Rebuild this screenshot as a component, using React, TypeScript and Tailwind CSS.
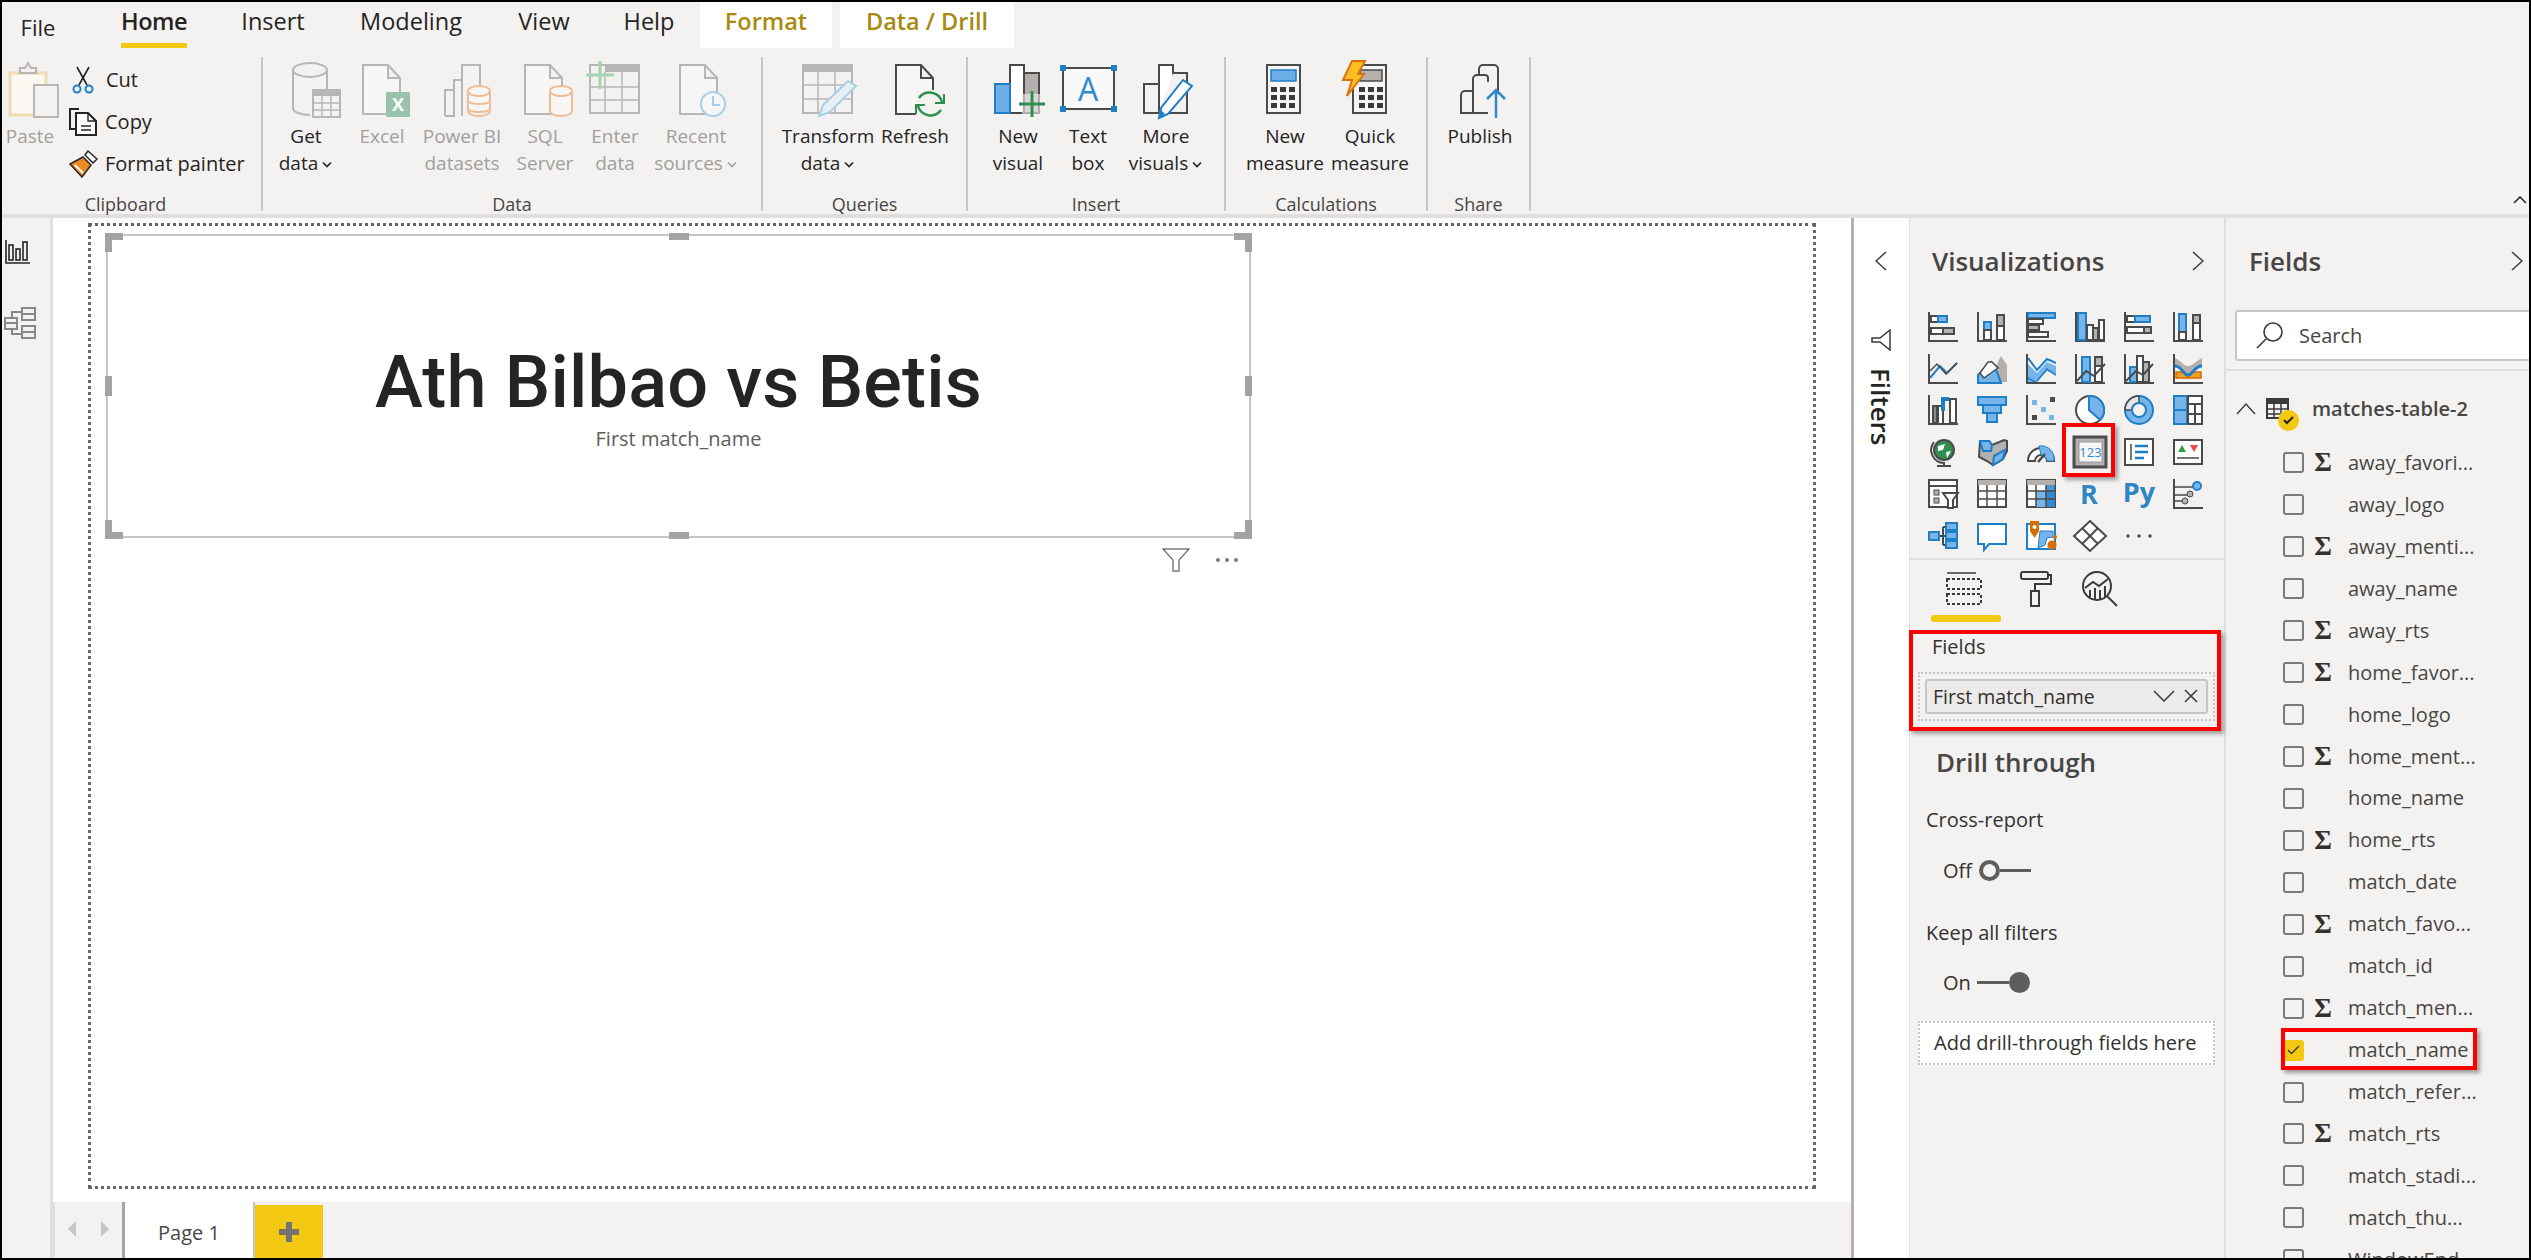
import type { ReactNode } from "react";

const D = "#4a4a4a";
const B = "#76b4ea";
const BD = "#1e7fc8";
const G = "#b3b0ad";
const W = "#ffffff";
const L = "#b8b6b4";

function R(x: number, y: number, w: number, h: number, f: string, s: string = D) {
  return <rect x={x} y={y} width={w} height={h} fill={f} stroke={s} strokeWidth={2} />;
}

const Ax = () => <path d="M1 0V29H30" stroke={D} strokeWidth={2} fill="none" />;

function Viz({ children }: { children: ReactNode }) {
  return (
    <svg width={30} height={30} viewBox="0 0 30 30" fill="none" className="overflow-visible">
      {children}
    </svg>
  );
}

const vizIcons: ReactNode[] = [
  <><Ax />{R(3, 4, 7, 6, W)}{R(10, 4, 9, 6, B, BD)}{R(3, 16, 12, 6, W)}{R(15, 16, 11, 6, G)}</>,
  <><Ax />{R(7, 10, 7, 8, B, BD)}{R(7, 18, 7, 10, W)}{R(20, 3, 7, 11, G)}{R(20, 14, 7, 14, W)}</>,
  <><Ax />{R(2, 1, 27, 5, B, BD)}{R(2, 7, 15, 5, W)}{R(2, 13, 11, 5, G)}{R(2, 20, 20, 5, W)}</>,
  <><Ax />{R(3, 1, 8, 27, B, BD)}{R(12, 13, 6, 15, W)}{R(18, 16, 5, 12, G)}{R(24, 8, 5, 20, W)}</>,
  <><Ax />{R(3, 4, 8, 6, W)}{R(11, 4, 15, 6, B, BD)}{R(3, 15, 17, 6, W)}{R(20, 15, 7, 6, G)}</>,
  <><Ax />{R(6, 2, 7, 18, B, BD)}{R(6, 20, 7, 8, W)}{R(20, 3, 7, 8, G)}{R(20, 11, 7, 17, W)}</>,

  <><Ax /><path d="M2 24L12 12L19 19L29 9" stroke={BD} strokeWidth={2} /><path d="M2 17L9 10L18 20L29 9" stroke={D} strokeWidth={1.5} /></>,
  <><path d="M18 14L24 2L30 11V28H14Z" fill={G} /><path d="M1 29V21L14 8L20 18L24 29Z" fill={B} stroke={BD} strokeWidth={2} /><path d="M3 19L11 8H15L21 14L11 21L7 24Z" fill={W} stroke={D} strokeWidth={1.5} /><path d="M0 29H24" stroke={BD} strokeWidth={2} /></>,
  <><path d="M2 10L11 19L21 8L30 12V22L21 17L11 28H2Z" fill={B} stroke={BD} strokeWidth={0} /><path d="M2 4L11 16L21 5L30 9" stroke={BD} strokeWidth={2} /><path d="M2 24L11 29M30 21L21 15L11 27" stroke={BD} strokeWidth={1.5} /><Ax /></>,
  <><Ax />{R(7, 3, 8, 25, B, BD)}{R(20, 3, 7, 9, G)}{R(20, 12, 7, 16, W)}<path d="M2 27L11 17L19 22L30 10" stroke={D} strokeWidth={2} /></>,
  <><Ax />{R(6, 13, 7, 15, B, BD)}{R(13, 2, 6, 26, W)}{R(19, 8, 6, 20, G)}<path d="M2 27L12 17L19 21L29 10" stroke={D} strokeWidth={2} /></>,
  <><Ax /><path d="M2 4C10 8 10 12 15 12C20 12 21 8 29 4V13C21 13 21 22 15 22C9 22 9 13 2 13Z" fill={G} /><path d="M3 18H12L15 24L19 18H28V24H3Z" fill="#f0a020" stroke="#d86c00" strokeWidth={1.5} /><path d="M2 12C9 12 10 21 15 21C20 21 21 12 29 12" stroke={BD} strokeWidth={3} /></>,

  <><Ax />{R(5, 11, 4, 17, "#8a8886")}<path d="M10 28V11H15V28" stroke={D} strokeWidth={2} fill={W} /><path d="M15 16V4H21" stroke={BD} strokeWidth={4} /><path d="M22 4H28V28H22Z" fill={W} stroke={D} strokeWidth={2} /></>,
  <>{R(1, 2, 28, 8, B, BD)}{R(6, 10, 18, 8, B, BD)}{R(10, 18, 10, 9, B, BD)}</>,
  <><Ax /><rect x="6" y="5" width="5" height="5" fill={B} /><rect x="24" y="2" width="5" height="5" fill={D} /><rect x="15" y="12" width="5" height="5" fill={B} /><rect x="6" y="20" width="5" height="5" fill={D} /><rect x="23" y="20" width="5" height="5" fill={B} /></>,
  <><circle cx="15" cy="15" r="14" fill={W} stroke={D} strokeWidth={2} /><path d="M14 15V1A14 14 0 0 1 25 25Z" fill={B} stroke={BD} strokeWidth={2} /></>,
  <><circle cx="15" cy="15" r="14" fill={B} stroke={BD} strokeWidth={2} /><path d="M15 1A14 14 0 0 0 1 15H8A7 7 0 0 1 15 8Z" fill="#e6e4e2" stroke={D} strokeWidth={1.5} /><circle cx="15" cy="15" r="7" fill="#f3f2f1" stroke={BD} strokeWidth={2} /></>,
  <>{R(1, 1, 13, 28, B, BD)}<path d="M1 15H14" stroke={BD} strokeWidth={2} />{R(15, 1, 14, 28, W)}<path d="M15 9H29M15 19H29M22 9V29" stroke={D} strokeWidth={2} /></>,

  <><circle cx="16" cy="13" r="10" fill="#2f8f4e" stroke={D} strokeWidth={2} /><path d="M10 9L17 7L15 13L10 14ZM18 15L23 14L19 21Z" fill={W} /><path d="M6 5A13 13 0 0 0 16 26V29M9 29H23" stroke={D} strokeWidth={2} /></>,
  <><path d="M3 4H12L15 8L27 3L30 4V14L26 22L16 28L10 24L2 20Z" fill={G} stroke={D} strokeWidth={2} /><path d="M3 4H12L15 8L14 14H6ZM17 19L28 13L26 22L16 28Z" fill={B} stroke={BD} strokeWidth={2} /></>,
  <><path d="M2 24A13 13 0 0 1 28 24H21A6 6 0 0 0 9 24Z" fill={W} stroke={D} strokeWidth={2} /><path d="M13 9A13 13 0 0 1 28 24H21A7 7 0 0 0 15 18Z" fill={B} stroke={BD} strokeWidth={1} /><path d="M12 25L19 17" stroke={D} strokeWidth={2.5} /></>,
  <>
    <rect x="-1" y="0" width="32" height="30" fill="#b3b0ad" stroke="#4d4d4d" strokeWidth={3} />
    <rect x="4" y="5" width="23" height="20" fill="#f7f7f7" stroke="#9a9a9a" strokeWidth={1} />
    <text x="15.5" y="20" textAnchor="middle" fontSize={13} fill="#2f8ad0" fontFamily="Open Sans, sans-serif">123</text>
  </>,
  <>{R(1, 2, 28, 26, W)}<path d="M7 7V23" stroke={D} strokeWidth={1.5} /><path d="M11 9H24M11 15H24M11 21H20" stroke={BD} strokeWidth={2.5} /></>,
  <>{R(1, 3, 28, 24, W)}<path d="M5 15L9 8L13 15Z" fill="#2f9e44" /><path d="M17 8H25L21 15Z" fill="#e8474c" /><path d="M4 21H26" stroke={D} strokeWidth={1.5} /></>,

  <>{R(1, 1, 28, 27, W)}<path d="M1 7H29" stroke={D} strokeWidth={2} /><rect x="6" y="11" width="5" height="5" fill={G} stroke={D} /><rect x="6" y="19" width="5" height="5" fill={G} stroke={D} /><path d="M15 14H30L25 21V29H20V21Z" fill={W} stroke={D} strokeWidth={2} /></>,
  <>{R(1, 1, 28, 27, W)}<rect x="1" y="1" width="28" height="5" fill={G} /><path d="M1 12H29M1 20H29M10 6V28M20 6V28" stroke={D} strokeWidth={1.5} /></>,
  <>{R(1, 1, 28, 27, W)}<rect x="1" y="1" width="28" height="5" fill={G} /><rect x="10" y="12" width="19" height="16" fill={B} /><rect x="20" y="6" width="9" height="22" fill={BD} opacity={0.8} /><path d="M1 12H29M1 20H29M10 6V28M20 6V28" stroke={D} strokeWidth={1.5} /></>,
  <text x="14" y="25" textAnchor="middle" fontSize={27} fontWeight={700} fill="#2f86c5" fontFamily="Open Sans, sans-serif">R</text>,
  <text x="15" y="23" textAnchor="middle" fontSize={27} fontWeight={700} fill="#2f86c5" fontFamily="Open Sans, sans-serif">Py</text>,
  <><Ax /><path d="M2 8H22M2 16H14M2 22H9" stroke={D} strokeWidth={1.5} /><circle cx="24" cy="7" r="4" fill={B} stroke={BD} strokeWidth={2} /><circle cx="17" cy="15" r="3" fill={G} stroke={D} /><circle cx="12" cy="22" r="3" fill={G} stroke={D} /></>,

  <><path d="M11 15H15M15 6H18M15 15H18M15 24H18M15 6V24" stroke={D} strokeWidth={2} />{R(1, 11, 10, 8, B, BD)}{R(18, 2, 11, 7, B, BD)}{R(18, 11, 11, 7, B, BD)}{R(18, 20, 11, 7, B, BD)}</>,
  <path d="M1 3H29V23H12L7 29V23H1Z" fill={W} stroke={BD} strokeWidth={2} />,
  <><path d="M1 3H29V28H1Z" fill={W} stroke={BD} strokeWidth={2} /><path d="M14 10H27V16L21 17L19 24L12 27Z" fill={B} stroke={BD} strokeWidth={1} /><path d="M4 0H13V10L8.5 17L4 10Z" fill="#d86c00" /><circle cx="8.5" cy="6" r="2" fill={W} /><circle cx="26" cy="24" r="4.5" fill="#d86c00" /><circle cx="29" cy="16" r="2" fill="#d86c00" /></>,
  <><path d="M15 0L31 15L15 30L-1 15Z" fill={W} stroke={D} strokeWidth={2} /><path d="M7 7L23 23M23 7L15 15M7 23L15 15" stroke={D} strokeWidth={2} /></>,
  <><circle cx="4" cy="15" r="1.7" fill={D} /><circle cx="15" cy="15" r="1.7" fill={D} /><circle cx="26" cy="15" r="1.7" fill={D} /></>,
];

function Rib({ children }: { children: ReactNode }) {
  return (
    <svg width={64} height={60} viewBox="0 0 64 60" fill="none" className="overflow-visible shrink-0">
      {children}
    </svg>
  );
}

const page = (x: number, c: string) => (
  <path d={`M${x} 5H${x + 25}L${x + 37} 18V54H${x}Z M${x + 25} 5V18H${x + 37}`} fill="#f7f6f5" stroke={c} strokeWidth={2} />
);

const iconGetData = (
  <Rib>
    <ellipse cx="36" cy="10" rx="17" ry="7" fill="#f3f2f1" stroke={L} strokeWidth={2} />
    <path d="M19 10V48C19 52 27 55 36 55M53 10V30" stroke={L} strokeWidth={2} />
    <rect x="39" y="30" width="27" height="27" fill="#f3f2f1" stroke={L} strokeWidth={2} />
    <rect x="39" y="30" width="27" height="6" fill={L} />
    <path d="M39 43H66M39 50H66M48 36V57M57 36V57" stroke={L} strokeWidth={1.5} />
  </Rib>
);
const iconExcel = (
  <Rib>
    {page(13, L)}
    <rect x="36" y="32" width="24" height="25" rx="1" fill="#9ac3ae" />
    <text x="48" y="51" textAnchor="middle" fontSize={18} fontWeight={700} fill="#fff" fontFamily="Open Sans, sans-serif">X</text>
  </Rib>
);
const dbIcon = (x: number) => (
  <g stroke="#eebd96" strokeWidth={2} fill="#f7f6f5">
    <path d={`M${x} 31V51C${x} 54 ${x + 5} 56 ${x + 11} 56C${x + 17} 56 ${x + 22} 54 ${x + 22} 51V31`} />
    <ellipse cx={x + 11} cy={31} rx={11} ry={5} />
  </g>
);
const iconPowerBi = (
  <Rib>
    <path d="M32 56V5H50V30M24 56V20H32M15 56V30H24V56H15" stroke={L} strokeWidth={2} fill="#f3f2f1" />
    {dbIcon(38)}
    <path d="M38 41C40 45 58 45 60 41M38 49C40 53 58 53 60 49" stroke="#eebd96" strokeWidth={2} />
  </Rib>
);
const iconSql = (
  <Rib>
    {page(12, L)}
    {dbIcon(37)}
  </Rib>
);
const iconEnter = (
  <Rib>
    <rect x="7" y="5" width="49" height="48" fill="#f3f2f1" stroke={L} strokeWidth={2} />
    <rect x="22" y="5" width="34" height="7" fill={L} />
    <path d="M7 27H56M7 40H56M22 12V53M39 12V53" stroke={L} strokeWidth={1.5} />
    <path d="M17 1V29M3 15H31" stroke="#a5d3b4" strokeWidth={3} />
  </Rib>
);
const iconRecent = (
  <Rib>
    {page(16, L)}
    <circle cx="49" cy="44" r="12" fill="#f7f6f5" stroke="#a9cfe8" strokeWidth={2} />
    <path d="M49 36V45H56" stroke="#a9cfe8" strokeWidth={2} />
  </Rib>
);
const iconTransform = (
  <Rib>
    <rect x="7" y="5" width="49" height="48" fill="#f3f2f1" stroke={L} strokeWidth={2} />
    <rect x="7" y="5" width="49" height="7" fill={L} />
    <path d="M7 25H56M7 39H56M22 12V53M39 12V53" stroke={L} strokeWidth={1.5} />
    <path d="M52 21L60 26L34 52L23 56L27 45Z" fill="#e6eef6" stroke="#a9cfe8" strokeWidth={2} />
  </Rib>
);
const iconRefresh = (
  <Rib>
    {page(13, D)}
    <rect x="33" y="30" width="28" height="30" fill="#f3f2f1" />
    <path d="M36 38A13 13 0 0 1 59 42M58 50A13 13 0 0 1 35 46" stroke="#2f8f4e" strokeWidth={2.5} />
    <path d="M61 34V43H52M33 54V45H42" stroke="#2f8f4e" strokeWidth={2} />
  </Rib>
);
const iconNewVisual = (
  <Rib>
    <rect x="38" y="13" width="15" height="40" fill={G} stroke={D} strokeWidth={2} />
    <rect x="24" y="5" width="14" height="48" fill="#fff" stroke={D} strokeWidth={2} />
    <rect x="9" y="24" width="15" height="29" fill="#6caee8" stroke={BD} strokeWidth={2} />
    <rect x="36" y="34" width="22" height="24" fill="#f3f2f1" opacity={0.6} />
    <path d="M46 31V57M33 44H59" stroke="#2f8f4e" strokeWidth={3} />
  </Rib>
);
const iconTextBox = (
  <Rib>
    <rect x="7" y="8" width="51" height="41" fill="#f9f9f9" stroke={D} strokeWidth={2} />
    <rect x="4" y="5" width="6" height="6" fill={BD} />
    <rect x="55" y="5" width="6" height="6" fill={BD} />
    <rect x="4" y="46" width="6" height="6" fill={BD} />
    <rect x="55" y="46" width="6" height="6" fill={BD} />
    <text x="32" y="41" textAnchor="middle" fontSize={32} fill="#2f8ad0" fontFamily="Open Sans, sans-serif">A</text>
  </Rib>
);
const iconMoreVisuals = (
  <Rib>
    <rect x="10" y="24" width="15" height="29" fill="#f3f2f1" stroke={D} strokeWidth={2} />
    <path d="M25 53V5H39V53" fill="#fff" stroke={D} strokeWidth={2} />
    <path d="M39 13H53V53H25" fill="#f3f2f1" stroke={D} strokeWidth={2} />
    <path d="M49 20L58 26L34 54L25 58L27 48Z" fill="#fff" stroke={BD} strokeWidth={2} />
    <path d="M25 58L27 50L31 54Z" fill={BD} />
  </Rib>
);
const calcKeys = (x: number) => (
  <g fill="#3b3a39">
    {[27, 35, 43].map((y) =>
      [0, 9, 18].map((dx) => <rect key={`${y}-${dx}`} x={x + dx} y={y} width={6} height={5} />)
    )}
  </g>
);
const iconNewMeasure = (
  <Rib>
    <rect x="14" y="5" width="33" height="48" fill="#f7f6f5" stroke={D} strokeWidth={2} />
    <rect x="18" y="10" width="25" height="11" fill="#6caee8" stroke={BD} strokeWidth={1.5} />
    {calcKeys(18)}
  </Rib>
);
const iconQuick = (
  <Rib>
    <rect x="15" y="5" width="33" height="48" fill="#f7f6f5" stroke={D} strokeWidth={2} />
    <rect x="22" y="10" width="22" height="11" fill={G} stroke={D} strokeWidth={1.5} />
    {calcKeys(21)}
    <path d="M14 1H27L20 14H26L9 36L14 20H5Z" fill="#fbbf24" stroke="#d9720f" strokeWidth={2} />
  </Rib>
);
const iconPublish = (
  <Rib>
    <path d="M13 53V35A4 4 0 0 1 17 31H25V53H13ZM25 53V19A4 4 0 0 1 29 15H31V9A4 4 0 0 1 35 5H46A4 4 0 0 1 50 9V34M25 53H40M31 15H37A3 3 0 0 1 40 18V22" stroke={D} strokeWidth={2} fill="none" />
    <path d="M48 58V30M39 39L48 30L57 39" stroke="#2f86c5" strokeWidth={2.5} />
  </Rib>
);
const iconPaste = (
  <Rib>
    <rect x="12" y="13" width="36" height="42" fill="#fbf8f2" stroke="#f0d9b5" strokeWidth={3} />
    <path d="M22 13V8H27L30 3L33 8H38V13Z" fill="#f3f2f1" stroke={L} strokeWidth={2} />
    <rect x="36" y="25" width="24" height="32" fill="#f3f2f1" stroke={L} strokeWidth={2} />
  </Rib>
);

function RibbonButton({ w, icon, l1, l2, muted, caret }: { w: number; icon: ReactNode; l1: string; l2?: string; muted?: boolean; caret?: boolean }) {
  return (
    <div className={`flex flex-col items-center pt-[3px] text-[19px] leading-[28px] whitespace-nowrap ${muted ? "text-[#a19f9d]" : "text-[#252423]"}`} style={{ width: w }}>
      {icon}
      <span className="mt-[2px] h-[28px]">{l1}</span>
      <span className="h-[28px] flex items-center -mt-[1px]">
        {l2}
        {caret && (
          <svg width="12" height="8" viewBox="0 0 12 8" className="ml-[3px] mt-[3px]" fill="none">
            <path d="M2 1.5L6 5.5L10 1.5" stroke={muted ? "#a19f9d" : "#252423"} strokeWidth="1.6" />
          </svg>
        )}
      </span>
    </div>
  );
}

function Group({ w, pl, label, labelPr = 0, children }: { w: number; pl: number; label: string; labelPr?: number; children: ReactNode }) {
  return (
    <div className="relative h-[154px] mt-[9px] shrink-0 border-r-2 border-[#c8c6c4] flex" style={{ width: w, paddingLeft: pl }}>
      {children}
      <span className="absolute left-0 right-0 bottom-[-5px] text-center text-[18px] leading-[24px] text-[#484644]" style={{ paddingRight: labelPr }}>
        {label}
      </span>
    </div>
  );
}

const tabClass = "h-full flex items-start pt-[4px] justify-center text-[#252423] shrink-0";

function Ribbon() {
  return (
    <div className="h-[216px] shrink-0 border-b-4 border-[#e1dfdd] bg-[#f3f2f1] text-[20px] relative">
      <div className="h-[46px] flex text-[23.5px] leading-[30px]">
        <div className={`${tabClass} w-[72px] pt-[10px] text-[22px]`}>File</div>
        <div className={`${tabClass} w-[120px] ml-[20px] font-semibold`}>
          <span className="h-full border-b-[5px] border-[#f2c811] tracking-[-0.5px]">Home</span>
        </div>
        <div className={`${tabClass} w-[118px]`}>Insert</div>
        <div className={`${tabClass} w-[158px]`}>Modeling</div>
        <div className={`${tabClass} w-[108px]`}>View</div>
        <div className={`${tabClass} w-[102px]`}>Help</div>
        <div className="h-full w-[132px] bg-white flex justify-center pt-[4px] font-semibold text-[#a98a10]">Format</div>
        <div className="h-full w-[174px] ml-[8px] bg-white flex justify-center pt-[4px] font-semibold text-[#a98a10]">Data / Drill</div>
      </div>
      <div className="flex">
        <Group w={261} pl={0} label="Clipboard" labelPr={12}>
          <RibbonButton w={56} icon={iconPaste} l1="Paste" muted />
          <div className="flex flex-col pt-[2px] ml-[14px] text-[#252423]">
            <div className="h-[42px] flex items-center gap-[12px]">
              <svg width="22" height="28" viewBox="0 0 22 28" fill="none">
                <path d="M5 1L15 19M17 1L7 19" stroke="#252423" strokeWidth="1.6" />
                <circle cx="5" cy="23" r="3.5" stroke={BD} strokeWidth="2" />
                <circle cx="17" cy="23" r="3.5" stroke={BD} strokeWidth="2" />
              </svg>
              Cut
            </div>
            <div className="h-[42px] flex items-center gap-[8px] -ml-[3px]">
              <svg width="28" height="28" viewBox="0 0 28 28" fill="none">
                <path d="M10 21H1V1H10" stroke="#252423" strokeWidth="2" />
                <path d="M7 5H19L27 13V27H7Z" fill="#fff" stroke="#252423" strokeWidth="2" />
                <path d="M19 5V13H27M12 18H22M12 22H22" stroke="#252423" strokeWidth="1.4" />
              </svg>
              Copy
            </div>
            <div className="h-[42px] flex items-center gap-[7px] -ml-[3px]">
              <svg width="29" height="28" viewBox="0 0 29 28" fill="none">
                <path d="M19 1L28 9L24 13L16 5Z" fill="#fff" stroke="#252423" strokeWidth="1.5" />
                <path d="M14 7L22 15L13 27L1 14Z" fill="#ee8a22" stroke="#252423" strokeWidth="1.5" />
                <path d="M6 15L14 23" stroke="#fff" strokeWidth="2" />
              </svg>
              Format painter
            </div>
          </div>
        </Group>
        <Group w={500} pl={9} label="Data">
          <RibbonButton w={68} icon={iconGetData} l1="Get" l2="data" caret />
          <RibbonButton w={84} icon={iconExcel} l1="Excel" muted />
          <RibbonButton w={76} icon={iconPowerBi} l1="Power BI" l2="datasets" muted />
          <RibbonButton w={90} icon={iconSql} l1="SQL" l2="Server" muted />
          <RibbonButton w={50} icon={iconEnter} l1="Enter" l2="data" muted />
          <RibbonButton w={112} icon={iconRecent} l1="Recent" l2="sources" muted caret />
        </Group>
        <Group w={205} pl={18} label="Queries">
          <RibbonButton w={94} icon={iconTransform} l1="Transform" l2="data" caret />
          <RibbonButton w={80} icon={iconRefresh} l1="Refresh" />
        </Group>
        <Group w={258} pl={18} label="Insert">
          <RibbonButton w={64} icon={iconNewVisual} l1="New" l2="visual" />
          <RibbonButton w={76} icon={iconTextBox} l1="Text" l2="box" />
          <RibbonButton w={80} icon={iconMoreVisuals} l1="More" l2="visuals" caret />
        </Group>
        <Group w={202} pl={11} label="Calculations">
          <RibbonButton w={96} icon={iconNewMeasure} l1="New" l2="measure" />
          <RibbonButton w={74} icon={iconQuick} l1="Quick" l2="measure" />
        </Group>
        <Group w={103} pl={10} label="Share">
          <RibbonButton w={84} icon={iconPublish} l1="Publish" />
        </Group>
      </div>
      <svg width="14" height="8" viewBox="0 0 14 8" fill="none" className="absolute right-[2px] bottom-[10px]">
        <path d="M1 7L7 1L13 7" stroke="#252423" strokeWidth="1.5" />
      </svg>
    </div>
  );
}

function Chevron({ left }: { left?: boolean }) {
  return (
    <svg width="12" height="20" viewBox="0 0 12 20" fill="none">
      <path d={left ? "M11 1L1 10L11 19" : "M1 1L11 10L1 19"} stroke="#3b3a39" strokeWidth="1.5" />
    </svg>
  );
}

function Handle({ className }: { className: string }) {
  return <div className={`absolute bg-[#a3a3a3] ${className}`} />;
}

function Canvas() {
  return (
    <div className="w-[1798px] shrink-0 flex flex-col bg-white">
      <div className="flex-1 pt-[5px] pl-[35px]">
        <div className="w-[1728px] h-[966px] border-[3px] border-dotted border-[#666666] pl-[14px] pt-[7px]">
          <div className="relative w-[1145px] h-[304px] border-2 border-[#c8c6c4] m-[1px] flex flex-col items-center bg-white">
            <Handle className="-left-[3px] -top-[3px] w-[18px] h-[7px]" />
            <Handle className="-left-[3px] -top-[3px] w-[7px] h-[19px]" />
            <Handle className="-right-[3px] -top-[3px] w-[18px] h-[7px]" />
            <Handle className="-right-[3px] -top-[3px] w-[7px] h-[19px]" />
            <Handle className="-left-[3px] -bottom-[3px] w-[18px] h-[7px]" />
            <Handle className="-left-[3px] -bottom-[3px] w-[7px] h-[19px]" />
            <Handle className="-right-[3px] -bottom-[3px] w-[18px] h-[7px]" />
            <Handle className="-right-[3px] -bottom-[3px] w-[7px] h-[19px]" />
            <Handle className="left-1/2 -ml-[10px] -top-[3px] w-[20px] h-[7px]" />
            <Handle className="left-1/2 -ml-[10px] -bottom-[3px] w-[20px] h-[7px]" />
            <Handle className="top-1/2 -mt-[10px] -left-[3px] w-[7px] h-[20px]" />
            <Handle className="top-1/2 -mt-[10px] -right-[3px] w-[7px] h-[20px]" />
            <div className="mt-[105px] text-[72px] leading-[84px] text-[#252423] font-medium font-['Roboto',sans-serif] tracking-[0.2px] whitespace-nowrap">
              Ath Bilbao vs Betis
            </div>
            <div className="mt-[0px] text-[20px] leading-[28px] text-[#605e5c]">First match_name</div>
          </div>
          <div className="w-[1147px] flex justify-end items-center pr-[13px] mt-[10px] gap-[25px]">
            <svg width="28" height="24" viewBox="0 0 28 24" fill="none">
              <path d="M1 1H27L17 12V23H11V12Z" stroke="#7a7a7a" strokeWidth="1.5" />
            </svg>
            <svg width="24" height="6" viewBox="0 0 24 6" fill="#7a7a7a">
              <circle cx="3" cy="3" r="2" />
              <circle cx="12" cy="3" r="2" />
              <circle cx="21" cy="3" r="2" />
            </svg>
          </div>
        </div>
      </div>
      <div className="h-[56px] flex bg-[#f3f2f1]">
        <div className="w-[69px] flex items-center justify-center gap-[25px] border-l-2 border-[#e1dfdd] pb-[2px]">
          <div className="w-0 h-0 border-y-[8px] border-y-transparent border-r-[8px] border-r-[#c8c6c4]" />
          <div className="w-0 h-0 border-y-[8px] border-y-transparent border-l-[8px] border-l-[#c8c6c4]" />
        </div>
        <div className="w-[133px] bg-white border-l-[3px] border-r-2 border-l-[#a6a6a6] border-r-[#c8c6c4] flex items-center justify-center text-[20px] text-[#484644] pt-[5px]">
          Page 1
        </div>
        <div className="w-[68px] mt-[3px] bg-[#f2c811] flex items-center justify-center text-[#6e6e6e]">
          <svg width="20" height="20" viewBox="0 0 20 20" fill="#737373">
            <rect x="7" y="0" width="6" height="20" />
            <rect x="0" y="7" width="20" height="6" />
          </svg>
        </div>
      </div>
    </div>
  );
}

function FilterStrip() {
  return (
    <div className="w-[58px] shrink-0 border-l-[3px] border-[#b3b0ad] bg-white flex flex-col items-center pt-[33px] pr-[1px]">
      <Chevron left />
      <svg width="20" height="22" viewBox="0 0 20 22" fill="none" className="mt-[58px]">
        <path d="M19 1V21L9 13H1V9H9Z" stroke="#3b3a39" strokeWidth="1.5" />
      </svg>
      <div className="mt-[17px] [writing-mode:vertical-rl] text-[26px] leading-[30px] font-semibold text-[#252423]">Filters</div>
    </div>
  );
}

function Toggle({ on }: { on?: boolean }) {
  return (
    <div className="mt-[23px] ml-[33px] h-[28px] flex items-center text-[20px] text-[#323130]">
      <span className={on ? "w-[34px]" : "w-[36px]"}>{on ? "On" : "Off"}</span>
      {on ? (
        <>
          <div className="w-[32px] h-[3px] bg-[#605e5c]" />
          <div className="w-[21px] h-[21px] rounded-full bg-[#605e5c]" />
        </>
      ) : (
        <>
          <div className="w-[21px] h-[21px] rounded-full border-[4px] border-[#605e5c]" />
          <div className="w-[31px] h-[3px] bg-[#605e5c]" />
        </>
      )}
    </div>
  );
}

const redBox = "absolute border-4 border-[#fe0000] shadow-[3px_3px_4px_rgba(0,0,0,0.35)]";

function VizPane() {
  return (
    <div className="relative w-[317px] shrink-0 border-r-2 border-l border-[#e1dfdd] flex flex-col">
      <div className="h-[88px] shrink-0 flex items-center justify-between pl-[22px] pr-[20px] pb-[2px]">
        <span className="text-[26px] font-semibold text-[#484644]">Visualizations</span>
        <Chevron />
      </div>
      <div className="grid grid-cols-[repeat(6,49px)] auto-rows-[41.8px] pl-[8px] border-b-2 border-[#e1dfdd] pb-[1px]">
        {vizIcons.map((icon, i) => (
          <div key={i} className="flex items-center justify-center">
            <Viz>{icon}</Viz>
          </div>
        ))}
      </div>
      <div className="h-[55px] shrink-0 flex items-center pl-[36px] pt-[3px]">
        <svg width="36" height="34" viewBox="0 0 36 34" fill="none">
          <path d="M1 1H30" stroke="#3b3a39" strokeWidth="1.5" />
          <rect x="1" y="7" width="34" height="10" stroke="#3b3a39" strokeWidth="2" strokeDasharray="3 2" />
          <rect x="1" y="22" width="34" height="10" stroke="#3b3a39" strokeWidth="2" strokeDasharray="3 2" />
        </svg>
        <svg width="32" height="36" viewBox="0 0 32 36" fill="none" className="ml-[38px]">
          <rect x="1" y="1" width="27" height="7" rx="2" stroke="#3b3a39" strokeWidth="2" />
          <path d="M28 4H31V13H15V20" stroke="#3b3a39" strokeWidth="2" />
          <rect x="11" y="20" width="8" height="15" stroke="#3b3a39" strokeWidth="2" />
        </svg>
        <svg width="36" height="36" viewBox="0 0 36 36" fill="none" className="ml-[30px]">
          <circle cx="15" cy="15" r="14" stroke="#3b3a39" strokeWidth="2" />
          <path d="M3 17L11 11L17 15L26 8" stroke="#3b3a39" strokeWidth="2" />
          <path d="M8 19V26M13 17V28M18 19V28M23 15V26" stroke="#3b3a39" strokeWidth="2" />
          <path d="M25 25L35 35" stroke="#3b3a39" strokeWidth="2" />
        </svg>
      </div>
      <div className="ml-[21px] w-[70px] h-[7px] shrink-0 rounded-[3px] bg-[#f2c811]" />
      <div className="mt-[11px] ml-[22px] h-[28px] flex items-center text-[20px] text-[#323130]">Fields</div>
      <div className="mt-[11px] ml-[8px] w-[297px] h-[49px] border-2 border-dotted border-[#c8c6c4] p-[5px]">
        <div className="h-full rounded-[3px] border-2 border-[#c8c6c4] bg-[#edebe9] flex items-center pl-[6px] pr-[8px] text-[19.5px] text-[#323130]">
          <span className="flex-1">First match_name</span>
          <svg width="22" height="12" viewBox="0 0 22 12" fill="none" className="mr-[9px]">
            <path d="M1 1L11 11L21 1" stroke="#3b3a39" strokeWidth="1.5" />
          </svg>
          <svg width="14" height="14" viewBox="0 0 14 14" fill="none">
            <path d="M1 1L13 13M13 1L1 13" stroke="#3b3a39" strokeWidth="1.5" />
          </svg>
        </div>
      </div>
      <div className="mt-[22px] ml-[26px] h-[40px] flex items-center text-[26px] font-semibold text-[#484644]">Drill through</div>
      <div className="mt-[23px] ml-[16px] h-[28px] flex items-center text-[20px] text-[#323130]">Cross-report</div>
      <Toggle />
      <div className="mt-[34px] ml-[16px] h-[28px] flex items-center text-[20px] text-[#323130]">Keep all filters</div>
      <div className="-mt-[1px]">
        <Toggle on />
      </div>
      <div className="mt-[24px] ml-[8px] w-[297px] h-[44px] border-2 border-dotted border-[#c8c6c4] bg-white flex items-center pl-[14px] pt-[1px] text-[20px] text-[#323130]">
        Add drill-through fields here
      </div>
      <div className={`${redBox} left-[152px] top-[205px] w-[53px] h-[54px]`} />
      <div className={`${redBox} -left-[1px] top-[412px] w-[312px] h-[101px]`} />
    </div>
  );
}

const fields: [string, boolean][] = [
  ["away_favori...", true],
  ["away_logo", false],
  ["away_menti...", true],
  ["away_name", false],
  ["away_rts", true],
  ["home_favor...", true],
  ["home_logo", false],
  ["home_ment...", true],
  ["home_name", false],
  ["home_rts", true],
  ["match_date", false],
  ["match_favo...", true],
  ["match_id", false],
  ["match_men...", true],
  ["match_name", false],
  ["match_refer...", false],
  ["match_rts", true],
  ["match_stadi...", false],
  ["match_thu...", false],
  ["WindowEnd", false],
];

function FieldsPane() {
  return (
    <div className="relative flex-1 min-w-0 flex flex-col overflow-hidden">
      <div className="h-[88px] shrink-0 flex items-center justify-between pl-[23px] pr-[6px] pb-[2px]">
        <span className="text-[26px] font-semibold text-[#484644]">Fields</span>
        <Chevron />
      </div>
      <div className="mt-[4px] pb-[8px] border-b-2 border-[#e1dfdd] shrink-0">
        <div className="ml-[9px] w-[320px] h-[51px] bg-white border-2 border-[#c8c6c4] rounded-[3px] flex items-center pl-[19px] gap-[16px] text-[20px] text-[#484644]">
          <svg width="27" height="27" viewBox="0 0 27 27" fill="none">
            <circle cx="17" cy="10" r="9" stroke="#3b3a39" strokeWidth="1.6" />
            <path d="M10 17L1 26" stroke="#3b3a39" strokeWidth="1.6" />
          </svg>
          Search
        </div>
      </div>
      <div className="mt-[18px] h-[40px] shrink-0 flex items-center pl-[10px]">
        <svg width="20" height="12" viewBox="0 0 20 12" fill="none">
          <path d="M1 11L10 1L19 11" stroke="#3b3a39" strokeWidth="1.4" />
        </svg>
        <div className="relative ml-[10px] w-[24px] h-[22px]">
          <svg width="23" height="21" viewBox="0 0 23 21" fill="none">
            <rect x="1" y="1" width="21" height="19" stroke="#3b3a39" strokeWidth="2" />
            <rect x="1" y="1" width="21" height="5" fill="#3b3a39" />
            <path d="M1 11H22M1 16H22M8 6V20M15 6V20" stroke="#3b3a39" strokeWidth="1.5" />
          </svg>
          <div className="absolute left-[12px] top-[12px] w-[21px] h-[21px] rounded-full bg-[#f2c811] flex items-center justify-center">
            <svg width="11" height="9" viewBox="0 0 11 9" fill="none">
              <path d="M1 4L4 7L10 1" stroke="#252423" strokeWidth="2" />
            </svg>
          </div>
        </div>
        <span className="ml-[22px] text-[20px] font-semibold text-[#484644]">matches-table-2</span>
      </div>
      <div className="mt-[13px] flex flex-col">
        {fields.map(([name, sigma]) => (
          <div key={name} className="h-[41.95px] shrink-0 flex items-center pl-[57px] text-[20px] text-[#484644]">
            <div className={`w-[21px] h-[21px] rounded-[3px] flex items-center justify-center border-2 ${name === "match_name" ? "bg-[#f2c811] border-[#f2c811]" : "border-[#7a7a7a]"}`}>
              {name === "match_name" && (
                <svg width="13" height="10" viewBox="0 0 13 10" fill="none">
                  <path d="M1 5L4.5 8.5L12 1" stroke="#3b3a39" strokeWidth="1.4" />
                </svg>
              )}
            </div>
            <span className="w-[18px] ml-[10px] text-center text-[27px] leading-none font-bold text-[#323130] font-['Liberation_Serif',serif]">{sigma ? "Σ" : ""}</span>
            <span className="ml-[16px] whitespace-nowrap">{name}</span>
          </div>
        ))}
      </div>
      <div className={`${redBox} left-[55px] top-[810px] w-[196px] h-[42px]`} />
    </div>
  );
}

export default function App() {
  return (
    <div className="w-[2531px] h-[1260px] border-2 border-black overflow-hidden flex flex-col bg-[#f3f2f1] font-['Open_Sans',sans-serif]">
      <Ribbon />
      <div className="flex-1 min-h-0 flex">
        <div className="w-[51px] shrink-0 border-r-[3px] border-[#e1dfdd] flex flex-col items-start pl-[3px] pt-[22px]">
          <svg width="25" height="24" viewBox="0 0 25 24" fill="none">
            <path d="M1 0V23H25" stroke="#252423" strokeWidth="1.6" />
            <rect x="4" y="5" width="4" height="15" stroke="#252423" strokeWidth="1.6" />
            <rect x="11" y="9" width="4" height="11" stroke="#252423" strokeWidth="1.6" />
            <rect x="18" y="2" width="4" height="18" stroke="#252423" strokeWidth="1.6" />
          </svg>
          <svg width="32" height="32" viewBox="0 0 32 32" fill="none" className="mt-[43px] -ml-[1px]" stroke="#8a8886" strokeWidth="2">
            <rect x="1" y="11" width="12" height="11" />
            <rect x="18" y="1" width="13" height="12" />
            <rect x="18" y="19" width="13" height="12" />
            <path d="M1 16H13M18 7H31M18 25H31M8 11V5H18M8 22V27H18" />
          </svg>
        </div>
        <Canvas />
        <FilterStrip />
        <VizPane />
        <FieldsPane />
      </div>
    </div>
  );
}
